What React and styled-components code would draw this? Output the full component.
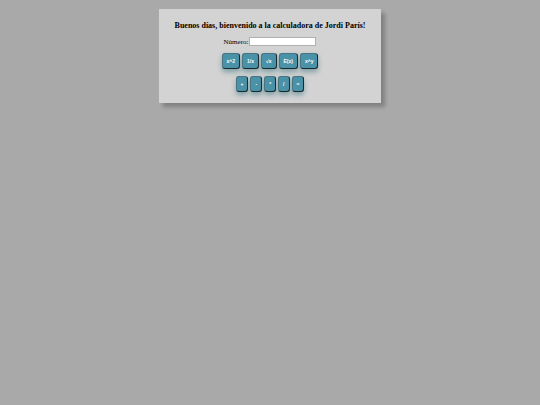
import React, { useState } from 'react';
import styled, { createGlobalStyle } from 'styled-components';

const GlobalStyle = createGlobalStyle`
  body {
    margin: 0;
    background-color: #a9a9a9;
    font-family: "Liberation Serif", "Times New Roman", serif;
  }
`;

const Page = styled.main`
  display: flex;
  justify-content: center;
  padding: 9px;
`;

const Calculator = styled.section`
  display: flex;
  flex-direction: column;
  align-items: center;
  padding: 12px 16px 11px;
  background-color: #d3d3d3;
  box-shadow: 4px 4px 4px #808080;
`;

const Title = styled.h1`
  margin: 0 0 6px;
  font-size: 8px;
  line-height: 10px;
  white-space: nowrap;
`;

const Field = styled.div`
  display: flex;
  align-items: center;
  gap: 1px;
  margin-bottom: 7px;
`;

const Label = styled.label`
  font-size: 7px;
  line-height: 8px;
`;

const NumberInput = styled.input`
  box-sizing: border-box;
  width: 67px;
  height: 9px;
  padding: 0 1px;
  border: 1px solid #b0b0b0;
  background-color: white;
  font-size: 6px;
`;

const ButtonRow = styled.div`
  display: flex;
  gap: 2px;

  & + & {
    margin-top: 7px;
  }
`;

const Button = styled.button`
  height: 16px;
  padding: 0 4px;
  border: 1px outset #4a7482;
  border-radius: 3px;
  background-color: #4a92a8;
  box-shadow: 0 3px 5px rgba(45, 110, 120, 0.5);
  color: white;
  font-family: "Liberation Sans", Arial, sans-serif;
  font-size: 5px;
  font-weight: bold;
  cursor: pointer;
`;

const unarias = {
  'x^2': (n) => n * n,
  '1/x': (n) => 1 / n,
  '√x': (n) => Math.sqrt(n),
  'E(x)': (n) => Math.trunc(n),
};

const binarias = {
  'x^y': (a, b) => a ** b,
  '+': (a, b) => a + b,
  '-': (a, b) => a - b,
  '*': (a, b) => a * b,
  '/': (a, b) => a / b,
};

const filas = [
  ['x^2', '1/x', '√x', 'E(x)', 'x^y'],
  ['+', '-', '*', '/', '='],
];

const App = () => {
  const [numero, setNumero] = useState('');
  const [pendiente, setPendiente] = useState(null);

  const handleClick = (op) => {
    const n = Number(numero);
    if (unarias[op]) {
      setNumero(String(unarias[op](n)));
    } else if (binarias[op]) {
      // Guarda el primer operando hasta pulsar "="
      setPendiente({ op, valor: n });
      setNumero('');
    } else if (pendiente) {
      setNumero(String(binarias[pendiente.op](pendiente.valor, n)));
      setPendiente(null);
    }
  };

  return (
    <Page>
      <GlobalStyle />
      <Calculator>
        <Title>Buenos días, bienvenido a la calculadora de Jordi París!</Title>
        <Field>
          <Label htmlFor="numero">Número:</Label>
          <NumberInput
            id="numero"
            type="text"
            value={numero}
            onChange={(e) => setNumero(e.target.value)}
          />
        </Field>
        {filas.map((fila) => (
          <ButtonRow key={fila[0]}>
            {fila.map((op) => (
              <Button key={op} type="button" onClick={() => handleClick(op)}>
                {op}
              </Button>
            ))}
          </ButtonRow>
        ))}
      </Calculator>
    </Page>
  );
};

export default App;
